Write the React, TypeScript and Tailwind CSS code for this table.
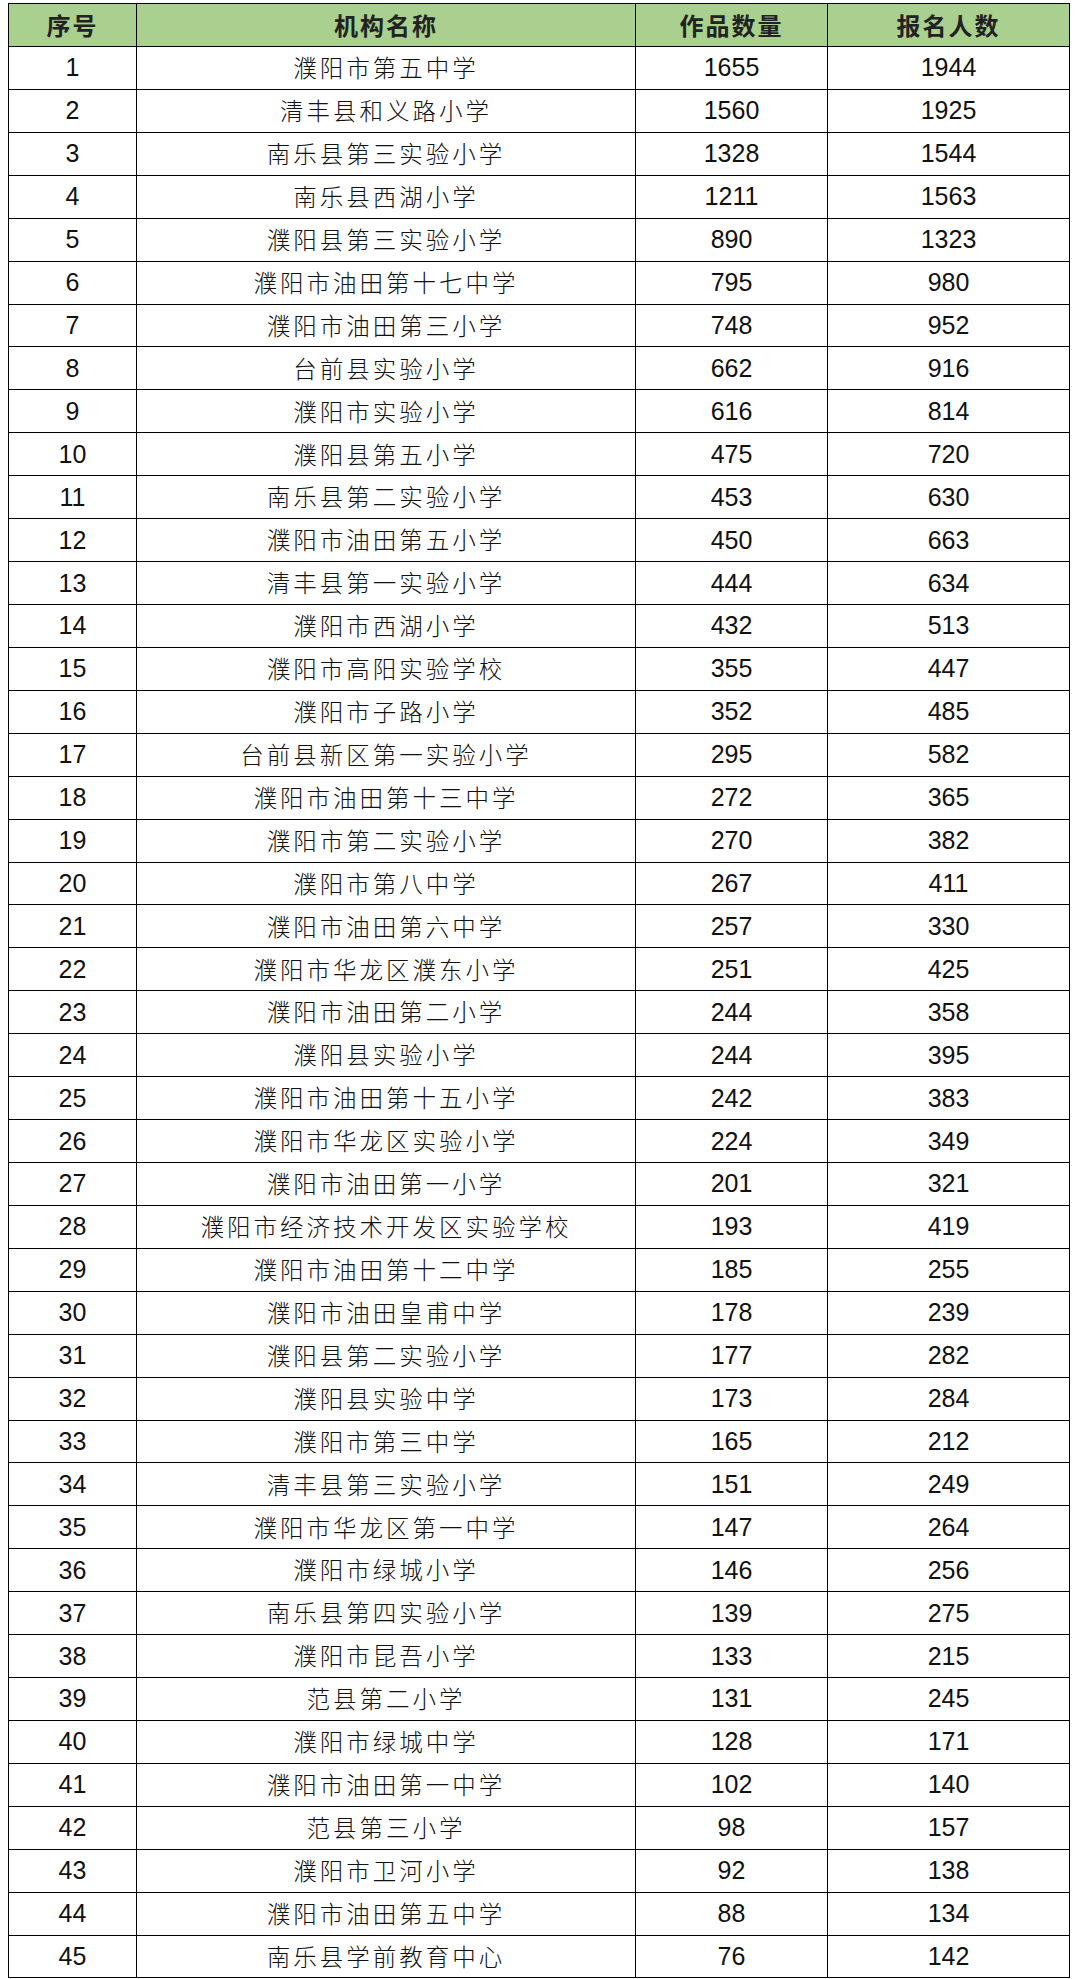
import React from 'react';

const rows: [number, string, number, number][] = [
  [1, "濮阳市第五中学", 1655, 1944],
  [2, "清丰县和义路小学", 1560, 1925],
  [3, "南乐县第三实验小学", 1328, 1544],
  [4, "南乐县西湖小学", 1211, 1563],
  [5, "濮阳县第三实验小学", 890, 1323],
  [6, "濮阳市油田第十七中学", 795, 980],
  [7, "濮阳市油田第三小学", 748, 952],
  [8, "台前县实验小学", 662, 916],
  [9, "濮阳市实验小学", 616, 814],
  [10, "濮阳县第五小学", 475, 720],
  [11, "南乐县第二实验小学", 453, 630],
  [12, "濮阳市油田第五小学", 450, 663],
  [13, "清丰县第一实验小学", 444, 634],
  [14, "濮阳市西湖小学", 432, 513],
  [15, "濮阳市高阳实验学校", 355, 447],
  [16, "濮阳市子路小学", 352, 485],
  [17, "台前县新区第一实验小学", 295, 582],
  [18, "濮阳市油田第十三中学", 272, 365],
  [19, "濮阳市第二实验小学", 270, 382],
  [20, "濮阳市第八中学", 267, 411],
  [21, "濮阳市油田第六中学", 257, 330],
  [22, "濮阳市华龙区濮东小学", 251, 425],
  [23, "濮阳市油田第二小学", 244, 358],
  [24, "濮阳县实验小学", 244, 395],
  [25, "濮阳市油田第十五小学", 242, 383],
  [26, "濮阳市华龙区实验小学", 224, 349],
  [27, "濮阳市油田第一小学", 201, 321],
  [28, "濮阳市经济技术开发区实验学校", 193, 419],
  [29, "濮阳市油田第十二中学", 185, 255],
  [30, "濮阳市油田皇甫中学", 178, 239],
  [31, "濮阳县第二实验小学", 177, 282],
  [32, "濮阳县实验中学", 173, 284],
  [33, "濮阳市第三中学", 165, 212],
  [34, "清丰县第三实验小学", 151, 249],
  [35, "濮阳市华龙区第一中学", 147, 264],
  [36, "濮阳市绿城小学", 146, 256],
  [37, "南乐县第四实验小学", 139, 275],
  [38, "濮阳市昆吾小学", 133, 215],
  [39, "范县第二小学", 131, 245],
  [40, "濮阳市绿城中学", 128, 171],
  [41, "濮阳市油田第一中学", 102, 140],
  [42, "范县第三小学", 98, 157],
  [43, "濮阳市卫河小学", 92, 138],
  [44, "濮阳市油田第五中学", 88, 134],
  [45, "南乐县学前教育中心", 76, 142],
];

export default function App() {
  return (
    <div className="w-[1080px] h-[1979px] bg-white pt-[3px] pl-[8px] font-['Liberation_Sans','Noto_Sans_CJK_SC',sans-serif] text-[#111]">
      <table className="table-fixed border-collapse w-[1061px]">
        <colgroup>
          <col className="w-[128px]" />
          <col className="w-[499px]" />
          <col className="w-[192px]" />
          <col className="w-[242px]" />
        </colgroup>
        <thead>
          <tr className="h-[43px] bg-[#a9d08e]">
            {["序号", "机构名称", "作品数量", "报名人数"].map((h) => (
              <th
                key={h}
                className="border border-black p-0 text-center align-middle text-[24px] font-bold tracking-[2px] font-['Noto_Sans_CJK_SC',sans-serif] text-[#222]"
              >
                {h}
              </th>
            ))}
          </tr>
        </thead>
        <tbody>
          {rows.map(([no, name, works, people]) => (
            <tr key={no} className="h-[42.93px]">
              <td className="border border-black p-0 text-center align-middle text-[25px] leading-none">{no}</td>
              <td className="border border-black p-0 text-center align-middle text-[23.5px] leading-none tracking-[3px] font-['Noto_Sans_CJK_SC',sans-serif] font-light">
                {name}
              </td>
              <td className="border border-black p-0 text-center align-middle text-[25px] leading-none">{works}</td>
              <td className="border border-black p-0 text-center align-middle text-[25px] leading-none">{people}</td>
            </tr>
          ))}
        </tbody>
      </table>
    </div>
  );
}
